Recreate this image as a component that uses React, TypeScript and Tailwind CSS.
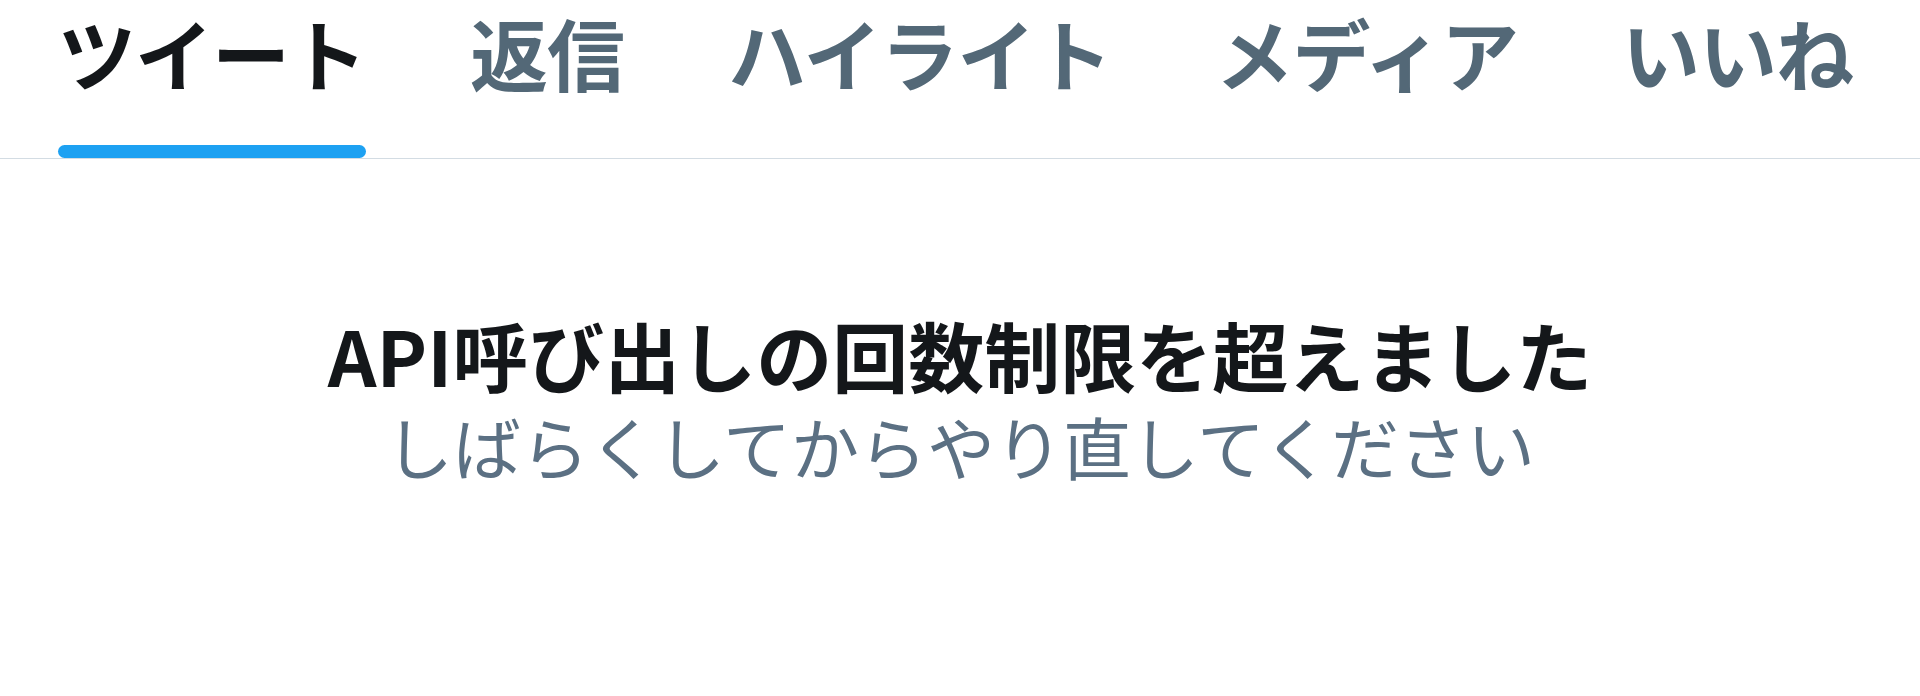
const tabs = ['ツイート', '返信', 'ハイライト', 'メディア', 'いいね']

function Tabs() {
  const active = 0
  return (
    <div className="flex h-[159px] border-b border-[#d3dce3] pl-[58px] gap-[104px]">
      {tabs.map((t, i) => (
        <div key={t} className="flex flex-col justify-between pt-[6px]">
          <span
            className={`text-[78px] leading-[1.2] font-bold whitespace-nowrap tracking-[-1px] ${i === active ? 'text-[#14171a]' : 'text-[#536877]'}`}
          >
            {t}
          </span>
          <div className={`h-[13px] rounded-full ${i === active ? 'bg-[#1da1f2]' : 'bg-transparent'}`} />
        </div>
      ))}
    </div>
  )
}

export default function App() {
  return (
    <div
      className="w-[1920px] h-[696px] bg-white overflow-hidden"
      style={{ fontFamily: '"Noto Sans CJK JP", "Noto Sans", sans-serif' }}
    >
      <Tabs />
      <div className="flex flex-col items-center pt-[150px]">
        <h1 className="text-[76px] leading-[1.2] font-bold text-[#14171a] whitespace-nowrap">
          API呼び出しの回数制限を超えました
        </h1>
        <p className="mt-[5px] text-[68px] leading-[1.2] font-normal text-[#5b7083] whitespace-nowrap">
          しばらくしてからやり直してください
        </p>
      </div>
    </div>
  )
}
